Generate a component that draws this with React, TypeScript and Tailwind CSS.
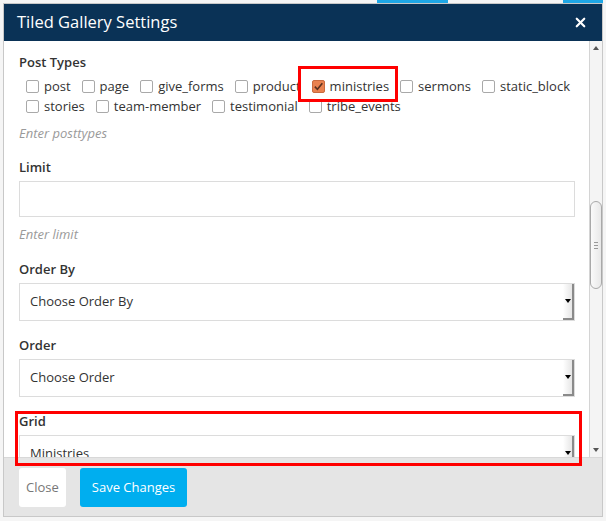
import { X } from "lucide-react";

const rowOne = [
  { label: "post" },
  { label: "page" },
  { label: "give_forms" },
  { label: "product" },
  { label: "ministries", checked: true },
  { label: "sermons" },
  { label: "static_block" },
];

const rowTwo = [
  { label: "stories" },
  { label: "team-member" },
  { label: "testimonial" },
  { label: "tribe_events" },
];

function Checkbox({ label, checked }: { label: string; checked?: boolean }) {
  return (
    <label className="flex items-center gap-[5px]">
      {checked ? (
        <span className="flex size-[13px] items-center justify-center rounded-[2px] border border-[#c96a3f] bg-[#e9814f]">
          <svg viewBox="0 0 12 12" className="size-[11px]">
            <path d="M2 6.2 L4.8 9 L10.2 2.4" fill="none" stroke="#5a3120" strokeWidth="1.8" />
          </svg>
        </span>
      ) : (
        <span className="size-[13px] rounded-[2px] border border-[#a9a9a9] bg-white" />
      )}
      <span>{label}</span>
    </label>
  );
}

function FakeSelect({ value }: { value: string }) {
  return (
    <div className="flex h-[38px] items-center border border-[#dcdcdc] bg-white pl-[10px]">
      <span className="grow text-[13px] text-[#333]">{value}</span>
      <div className="flex h-[36px] w-[11px] items-center justify-center border-r-2 border-b-2 border-[#8a8a8a] bg-gradient-to-r from-white to-[#e6e6e6]">
        <span className="h-0 w-0 border-x-[3px] border-t-[4px] border-x-transparent border-t-black" />
      </div>
    </div>
  );
}

function Label({ children }: { children: string }) {
  return <p className="text-[13px] font-semibold leading-[18px] text-[#333]">{children}</p>;
}

function Hint({ children }: { children: string }) {
  return <p className="text-[13px] italic leading-[18px] text-[#9a9a9a]">{children}</p>;
}

function Scrollbar() {
  return (
    <div className="flex w-[13px] flex-col border-l border-[#d4d4d4] bg-[#f4f4f4]">
      <div className="flex h-[14px] items-center justify-center">
        <span className="h-0 w-0 border-x-[3px] border-b-[4px] border-x-transparent border-b-[#555]" />
      </div>
      <div className="h-[146px]" />
      <div className="flex h-[88px] items-center justify-center rounded-[6px] border border-[#a9a9a9] bg-gradient-to-r from-[#fafafa] to-[#e8e8e8]">
        <div className="flex flex-col gap-[2px]">
          <span className="h-px w-[4px] bg-[#999]" />
          <span className="h-px w-[4px] bg-[#999]" />
          <span className="h-px w-[4px] bg-[#999]" />
        </div>
      </div>
      <div className="grow" />
      <div className="flex h-[14px] items-center justify-center">
        <span className="h-0 w-0 border-x-[3px] border-t-[4px] border-x-transparent border-t-[#555]" />
      </div>
    </div>
  );
}

export default function App() {
  return (
    <div className="relative h-[521px] w-[606px] overflow-hidden bg-[#f5f5f5] font-['Open_Sans',sans-serif]">
      {/* page behind the modal */}
      <div className="absolute left-[377px] top-0 h-[3px] w-[71px] bg-[#1ea7e6]" />
      <div className="absolute left-[563px] top-0 h-[3px] w-[40px] bg-[#1ea7e6]" />

      <div className="relative ml-[3px] mt-[3px] flex h-[514px] w-[600px] flex-col border border-[#c8c8c8] bg-white">
        <div className="flex h-[37px] shrink-0 items-center justify-between bg-[#0a3256] pl-[13px] pr-[14px]">
          <h2 className="text-[16.5px] text-white">Tiled Gallery Settings</h2>
          <X className="size-[15px] text-white" strokeWidth={3.5} />
        </div>

        <div className="flex h-[416px] shrink-0">
          <div className="grow overflow-hidden pl-[15px] pr-[14px] pt-[12px]">
            <Label>Post Types</Label>
            <div className="mt-[6px] flex flex-col gap-[2px] pl-[7px] text-[13px] leading-[18px] text-[#333]">
              <div className="flex gap-[11px]">
                {rowOne.map((item) => (
                  <Checkbox key={item.label} label={item.label} checked={item.checked} />
                ))}
              </div>
              <div className="flex gap-[11px]">
                {rowTwo.map((item) => (
                  <Checkbox key={item.label} label={item.label} />
                ))}
              </div>
            </div>
            <div className="mt-[9px]">
              <Hint>Enter posttypes</Hint>
            </div>

            <div className="mt-[16px]">
              <Label>Limit</Label>
              <div className="mt-[5px] h-[36px] border border-[#dcdcdc] bg-white" />
              <div className="mt-[8px]">
                <Hint>Enter limit</Hint>
              </div>
            </div>

            <div className="mt-[17px]">
              <Label>Order By</Label>
              <div className="mt-[5px]">
                <FakeSelect value="Choose Order By" />
              </div>
            </div>

            <div className="mt-[15px]">
              <Label>Order</Label>
              <div className="mt-[5px]">
                <FakeSelect value="Choose Order" />
              </div>
            </div>

            <div className="mt-[15px]">
              <Label>Grid</Label>
              <div className="mt-[5px]">
                <FakeSelect value="Ministries" />
              </div>
            </div>
          </div>
          <Scrollbar />
        </div>

        <div className="flex grow items-start gap-[14px] border-t border-[#d8d8d8] bg-[#e5e5e5] pl-[15px] pt-[10px]">
          <button className="h-[39px] rounded-[3px] bg-white px-[7px] text-[13px] text-[#777]">Close</button>
          <button className="h-[39px] rounded-[3px] bg-[#00aeef] px-[12px] text-[13px] text-white">Save Changes</button>
        </div>

        {/* annotation boxes */}
        <div className="absolute left-[294px] top-[62px] h-[36px] w-[100px] border-[3px] border-[#ff0000]" />
        <div className="absolute left-[11px] top-[407px] h-[55px] w-[567px] border-[3px] border-[#ff0000]" />
      </div>
    </div>
  );
}
